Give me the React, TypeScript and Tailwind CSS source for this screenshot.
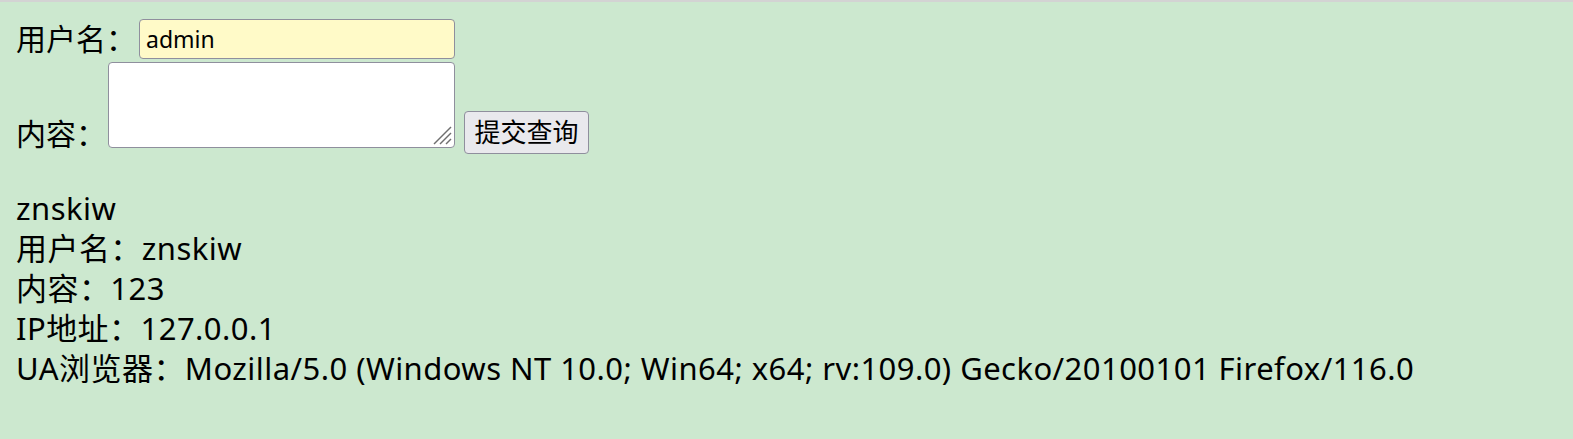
import React from "react";

export default function App() {
  const font = { fontFamily: '"Noto Sans", "Noto Sans CJK SC", sans-serif' };
  return (
    <div className="min-h-[439px] w-full bg-[#cce8cf] text-black border-t-2 border-[#d3d3d3]" style={font}>
      <div className="pl-4 pt-[16px]">
        <div className="flex items-center h-[42px]">
          <span className="text-[30px] leading-[40px] w-[123px] whitespace-nowrap">用户名：</span>
          <div className="w-[316px] h-[40px] bg-[#fffac8] border border-[#8f8f9d] rounded-[4px] px-[6px] flex items-center text-[23px]">
            admin
          </div>
        </div>
        <div className="flex items-end mt-[2px]">
          <span className="text-[30px] leading-[40px] w-[92px] mb-[-6px] whitespace-nowrap">内容：</span>
          <div className="relative w-[347px] h-[86px] bg-white border border-[#8f8f9d] rounded-[4px]">
            <svg className="absolute right-[2px] bottom-[2px]" width="20" height="20" viewBox="0 0 20 20">
              <line x1="19" y1="2" x2="2" y2="19" stroke="#6f6f6f" strokeWidth="1.4" />
              <line x1="19" y1="8" x2="8" y2="19" stroke="#6f6f6f" strokeWidth="1.4" />
              <line x1="19" y1="14" x2="14" y2="19" stroke="#6f6f6f" strokeWidth="1.4" />
            </svg>
          </div>
          <div className="ml-[9px] mb-[-6px] w-[125px] h-[43px] bg-[#e9e9ed] border border-[#8f8f9d] rounded-[4px] flex items-center justify-center text-[26px]">
            提交查询
          </div>
        </div>
        <div className="mt-[40px] text-[31px] leading-[40px] tracking-[0.45px] whitespace-nowrap">
          <div>znskiw</div>
          <div>用户名：znskiw</div>
          <div>内容：123</div>
          <div>IP地址：127.0.0.1</div>
          <div>UA浏览器：Mozilla/5.0 (Windows NT 10.0; Win64; x64; rv:109.0) Gecko/20100101 Firefox/116.0</div>
        </div>
      </div>
    </div>
  );
}
